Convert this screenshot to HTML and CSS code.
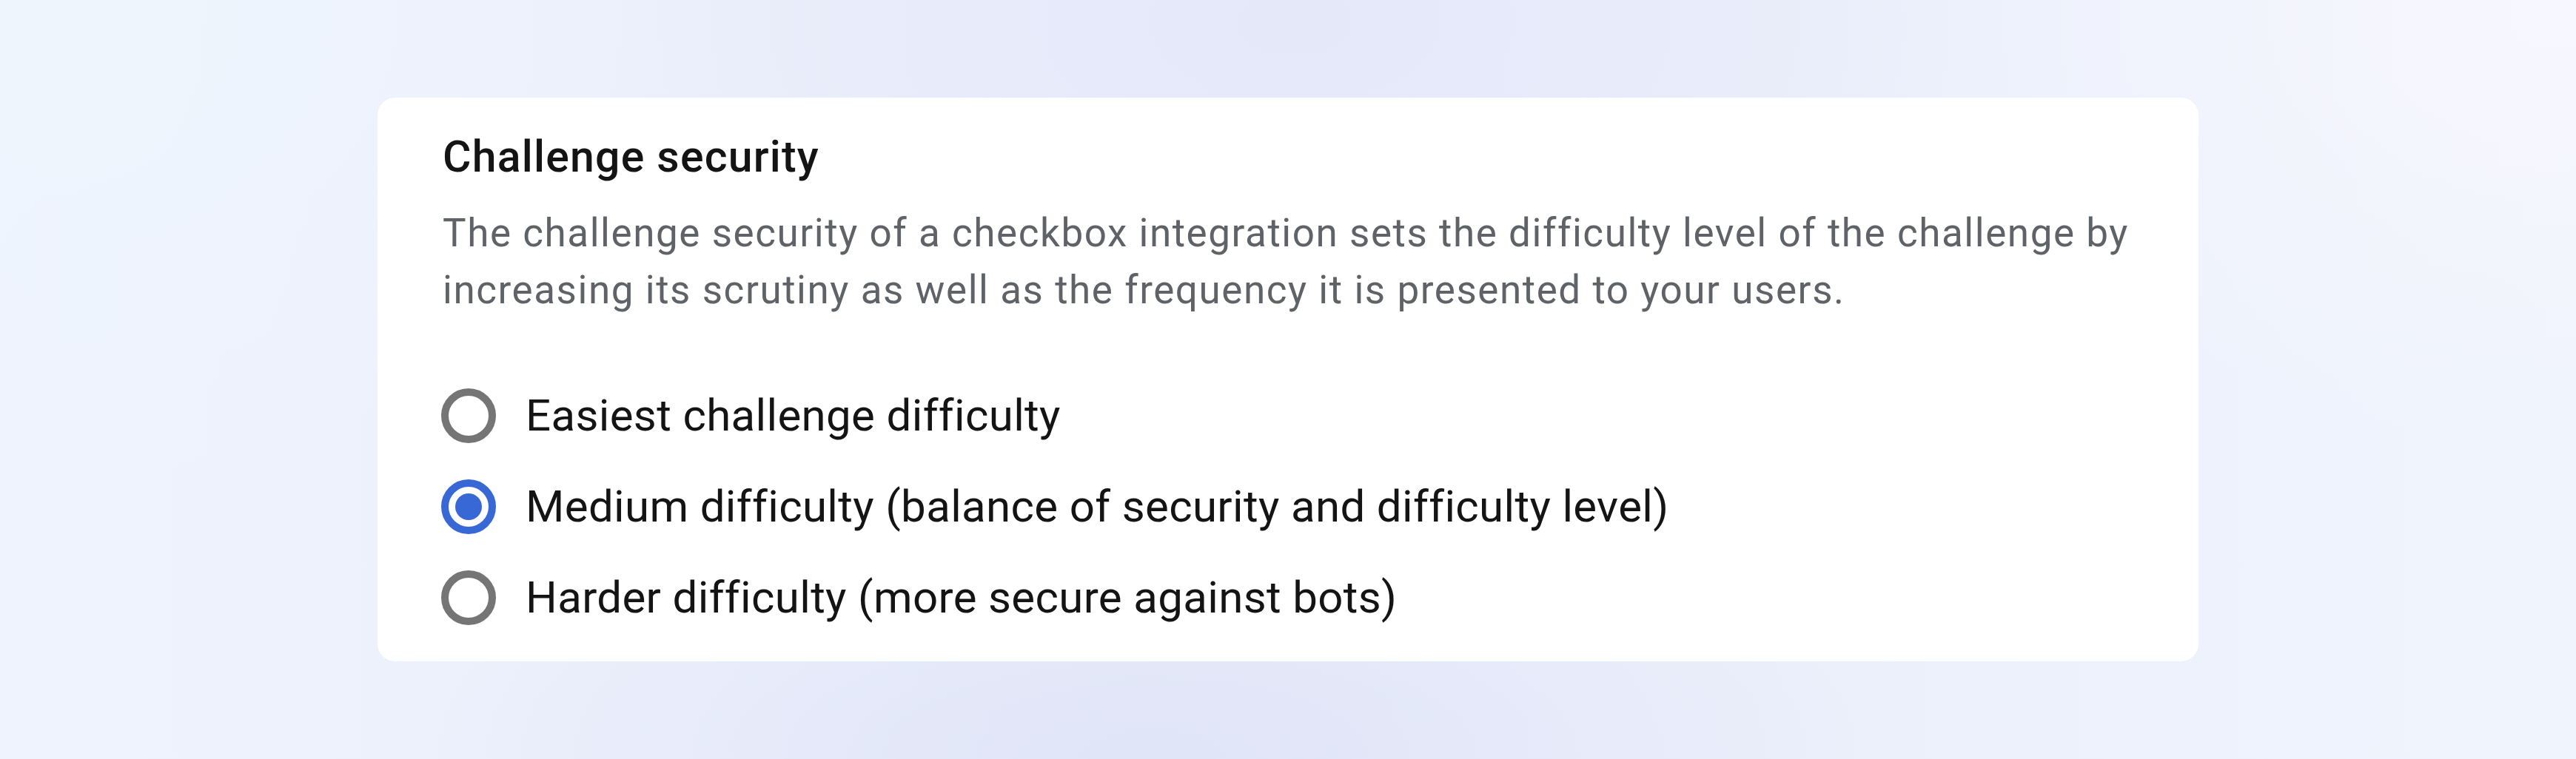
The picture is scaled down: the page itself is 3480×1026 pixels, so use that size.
FILE: index.html
```html
<!DOCTYPE html>
<html lang="en">
<head>
<meta charset="utf-8">
<title>Challenge security</title>
<link rel="stylesheet" href="styles.css">
</head>
<body>
<main class="stage">
  <section class="card">
    <h2 class="title">Challenge security</h2>
    <p class="desc">The challenge security of a checkbox integration sets the difficulty level of the challenge by increasing its scrutiny as well as the frequency it is presented to your users.</p>
    <div class="options">
      <label class="option"><span class="radio"></span><span class="label">Easiest challenge difficulty</span></label>
      <label class="option"><span class="radio checked"></span><span class="label">Medium difficulty (balance of security and difficulty level)</span></label>
      <label class="option"><span class="radio"></span><span class="label">Harder difficulty (more secure against bots)</span></label>
    </div>
  </section>
</main>
</body>
</html>
```

FILE: styles.css
```css
html, body {
  margin: 0;
  padding: 0;
  width: 100%;
  height: 100%;
}
body {
  font-family: Roboto, "Liberation Sans", Arial, sans-serif;
  background:
    radial-gradient(ellipse 900px 500px at 1750px 30px, #e4e8f9 0%, rgba(228,232,249,0) 100%),
    radial-gradient(ellipse 1000px 350px at 1550px 1020px, #e0e5f8 0%, rgba(224,229,248,0) 100%),
    radial-gradient(ellipse 800px 600px at 3450px 20px, #f7f7fe 0%, rgba(247,247,254,0) 100%),
    radial-gradient(ellipse 900px 700px at 0px 0px, #eef5fd 0%, rgba(238,245,253,0) 100%),
    linear-gradient(90deg, #eef3fd 0%, #e9edfa 50%, #f0f4fd 100%);
}
.stage {
  display: flex;
  align-items: center;
  justify-content: center;
  height: 1026px;
}
.card {
  box-sizing: border-box;
  width: 2460px;
  background: #ffffff;
  border-radius: 24px;
  padding: 45px 88px 25px 88px;
}
.title {
  margin: 0;
  font-size: 59px;
  line-height: 70px;
  font-weight: 500;
  letter-spacing: 1.2px;
  color: #141414;
}
.desc {
  margin: 30px 0 0 0;
  font-size: 53px;
  line-height: 77px;
  font-weight: 400;
  letter-spacing: 1.55px;
  color: #5f6368;
}
.options {
  margin-top: 69px;
  display: flex;
  flex-direction: column;
}
.option {
  display: flex;
  align-items: center;
  height: 123px;
}
.radio {
  box-sizing: border-box;
  flex: 0 0 74px;
  width: 74px;
  height: 74px;
  margin-left: -2px;
  border: 10px solid #757575;
  border-radius: 50%;
  display: flex;
  align-items: center;
  justify-content: center;
}
.radio.checked {
  border-color: #3868d6;
}
.radio.checked::after {
  content: "";
  width: 36px;
  height: 36px;
  border-radius: 50%;
  background: #3868d6;
}
.label {
  margin-left: 40px;
  font-size: 60px;
  line-height: 123px;
  letter-spacing: 0.35px;
  color: #141414;
}
```
